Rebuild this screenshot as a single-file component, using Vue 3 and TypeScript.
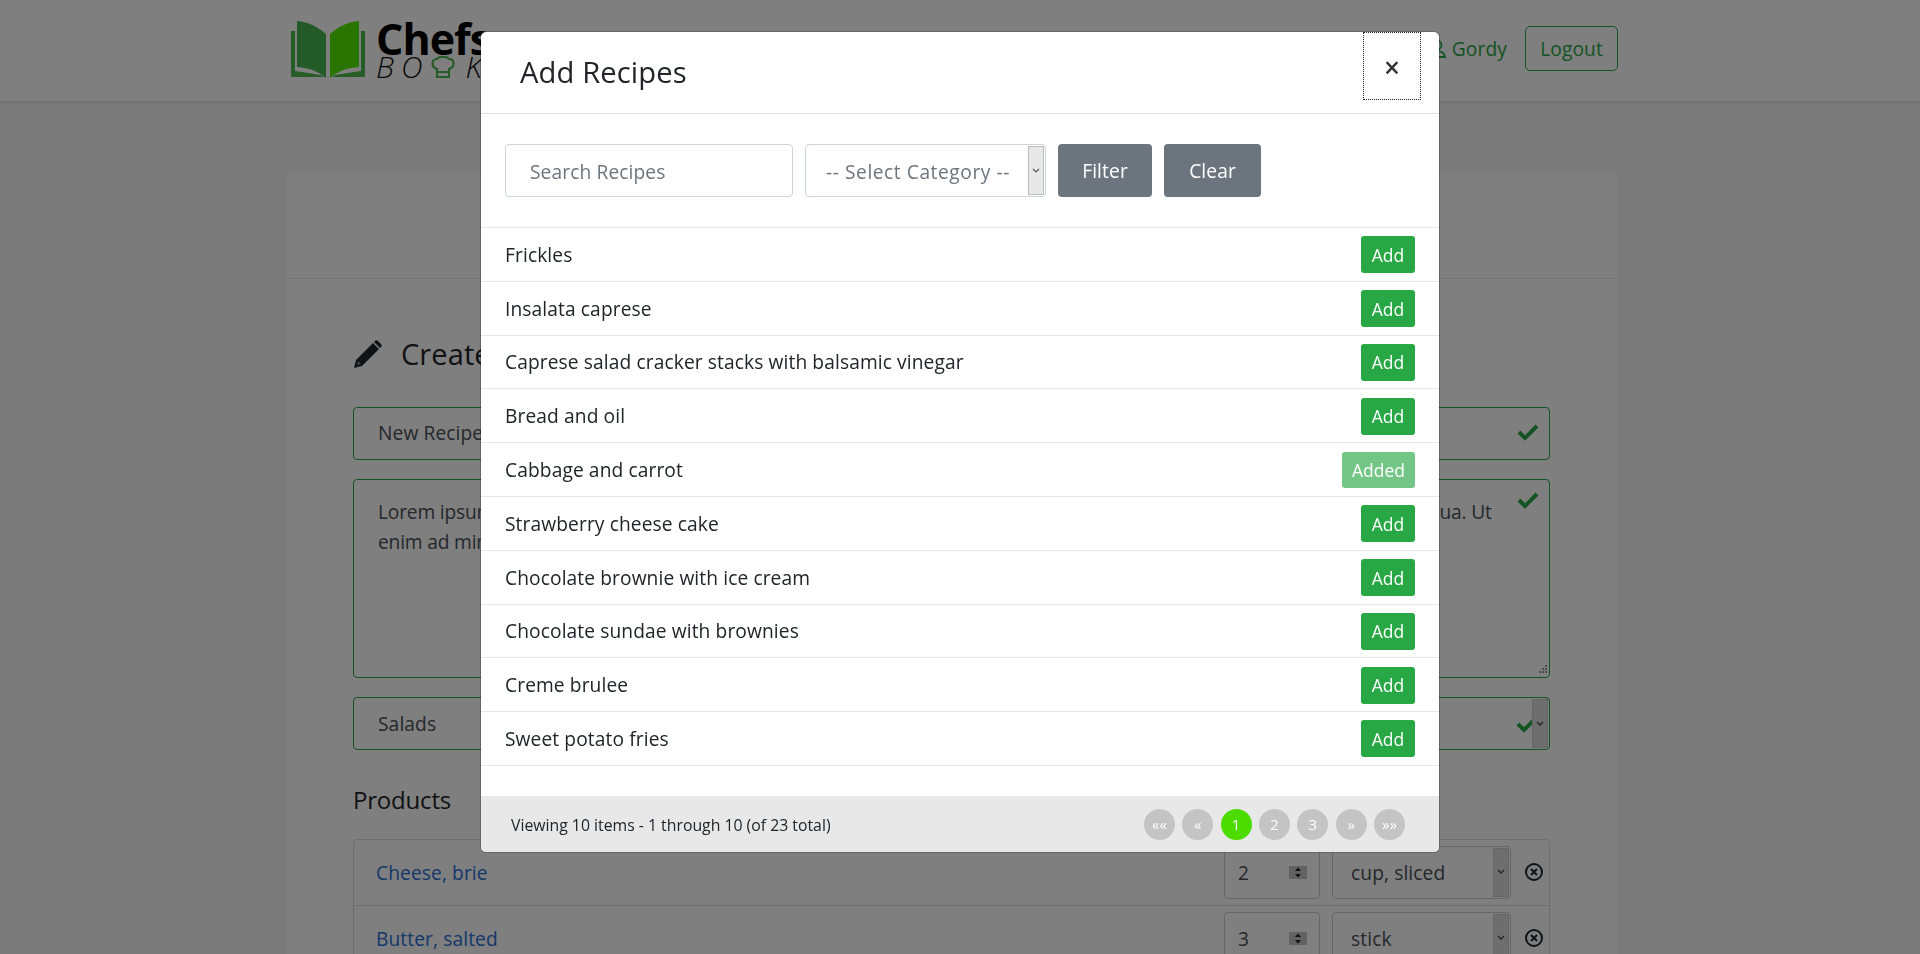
<script setup lang="ts">
const recipes: { name: string; added?: boolean }[] = [
  { name: 'Frickles' },
  { name: 'Insalata caprese' },
  { name: 'Caprese salad cracker stacks with balsamic vinegar' },
  { name: 'Bread and oil' },
  { name: 'Cabbage and carrot', added: true },
  { name: 'Strawberry cheese cake' },
  { name: 'Chocolate brownie with ice cream' },
  { name: 'Chocolate sundae with brownies' },
  { name: 'Creme brulee' },
  { name: 'Sweet potato fries' }
]
const pages = ['««', '«', '1', '2', '3', '»', '»»']
const products = [
  { name: 'Cheese, brie', qty: '2', unit: 'cup, sliced' },
  { name: 'Butter, salted', qty: '3', unit: 'stick' }
]
</script>

<template>
  <div class="page">
    <header class="nav">
      <div class="nav-in">
        <div class="logo">
          <svg width="76" height="60" viewBox="0 0 76 60">
            <path d="M1 11v46h33l-3-2-26-4V11z" fill="#4db84d" />
            <path d="M75 11v46H42l3-2 26-4V11z" fill="#4db84d" />
            <path d="M7 1c12 1 21 6 29 13v44c-8-7-17-10-29-11z" fill="#47b550" />
            <path d="M69 1c-12 1-21 6-29 13v44c8-7 17-10 29-11z" fill="#55ea00" />
          </svg>
          <div class="logo-text">
            <div class="chefs">Chefs</div>
            <div class="book">BO<svg class="hat" width="26" height="23" viewBox="0 0 26 23"><path d="M7 13C1 11 1 3 7 3c2-3 10-3 12 0 6 0 6 8 0 10v8H7zM7 16h12" fill="none" stroke="#4db84d" stroke-width="2.2"/></svg>K</div>
          </div>
        </div>
        <div class="nav-right">
          <svg class="user" width="20" height="20" viewBox="0 0 20 20"><circle cx="10" cy="6" r="4.5" fill="none" stroke="#28a745" stroke-width="1.8"/><path d="M2 18c0-8 16-8 16 0z" fill="none" stroke="#28a745" stroke-width="1.8"/></svg>
          <span class="gordy">Gordy</span>
          <button class="logout">Logout</button>
        </div>
      </div>
    </header>

    <main class="card">
      <div class="card-head"></div>
      <div class="card-body">
        <h2 class="create">
          <svg width="30" height="30" viewBox="0 0 30 30"><path d="M1 29l2-8L20 4l6 6L9 27zM22 2c1-1 2-1 3 0l3 3c1 1 1 2 0 3l-1 1-6-6z" fill="#212529"/><path d="M5 22l3 3-4 1z" fill="#8a8a8a"/></svg>
          <span>Create Recipe</span>
        </h2>
        <div class="field valid">
          <span>New Recipe</span>
          <svg class="check" width="22" height="18" viewBox="0 0 22 18"><path d="M2 9l6 6L20 3" fill="none" stroke="#28a745" stroke-width="4"/></svg>
        </div>
        <div class="field valid area">
          <p>Lorem ipsum dolor sit amet, consectetur adipiscing elit, sed do eiusmod tempor incididunt ut labore et dolore magna aliqua. Ut enim ad minim veniam, quis nostrud exercitation</p>
          <svg class="check top" width="22" height="18" viewBox="0 0 22 18"><path d="M2 9l6 6L20 3" fill="none" stroke="#28a745" stroke-width="4"/></svg>
          <svg class="grip" width="10" height="10" viewBox="0 0 10 10"><path d="M8 0h2v2H8zM5 3h2v2H5zM8 3h2v2H8zM2 6h2v2H2zM5 6h2v2H5zM8 6h2v2H8z" fill="#999"/></svg>
        </div>
        <div class="field valid sel">
          <span>Salads</span>
          <svg class="check near" width="22" height="18" viewBox="0 0 22 18"><path d="M2 9l6 6L20 3" fill="none" stroke="#28a745" stroke-width="4"/></svg>
          <span class="spin"><svg width="8" height="6" viewBox="0 0 8 6"><path d="M1 1l3 3 3-3" fill="none" stroke="#444" stroke-width="1.3"/></svg></span>
        </div>
        <h3 class="products">Products</h3>
        <div class="plist">
          <div class="prow" v-for="p in products" :key="p.name">
            <a class="pname">{{ p.name }}</a>
            <div class="qty">
              <span>{{ p.qty }}</span>
              <svg width="18" height="13" viewBox="0 0 18 13"><rect width="18" height="13" fill="#c4c4c4"/><path d="M9 1.5l3 3.5H6zM9 11.5l3-3.5H6z" fill="#222"/></svg>
            </div>
            <div class="unit">
              <span>{{ p.unit }}</span>
              <span class="spin"><svg width="8" height="6" viewBox="0 0 8 6"><path d="M1 1l3 3 3-3" fill="none" stroke="#444" stroke-width="1.3"/></svg></span>
            </div>
            <svg class="remove" width="20" height="20" viewBox="0 0 20 20"><circle cx="10" cy="10" r="8" fill="none" stroke="#212529" stroke-width="2"/><path d="M7 7l6 6M13 7l-6 6" stroke="#212529" stroke-width="2"/></svg>
          </div>
        </div>
      </div>
    </main>

    <div class="backdrop"></div>
    <div class="modal">
      <div class="m-head">
        <h4>Add Recipes</h4>
        <button class="close">×</button>
      </div>
      <div class="m-filter">
        <div class="search">Search Recipes</div>
        <div class="cat">
          <span>-- Select Category --</span>
          <span class="cat-spin"><svg width="8" height="6" viewBox="0 0 8 6"><path d="M1 1l3 3 3-3" fill="none" stroke="#555" stroke-width="1.2"/></svg></span>
        </div>
        <button class="gray filter">Filter</button>
        <button class="gray clear">Clear</button>
      </div>
      <ul class="m-list">
        <li v-for="r in recipes" :key="r.name">
          <span>{{ r.name }}</span>
          <button class="add" :class="{ added: r.added }">{{ r.added ? 'Added' : 'Add' }}</button>
        </li>
      </ul>
      <div class="m-foot">
        <span class="viewing">Viewing 10 items - 1 through 10 (of 23 total)</span>
        <div class="pager">
          <span v-for="p in pages" :key="p" class="pg" :class="{ on: p === '1' }">{{ p }}</span>
        </div>
      </div>
    </div>
  </div>
</template>

<style>
html, body { margin: 0; background: #f4f4f4; }
</style>

<style scoped>
* { box-sizing: border-box; }
.page {
  height: 954px; overflow: hidden; position: relative;
  font-family: "Open Sans", "Lato", sans-serif;
  font-size: 19.2px; letter-spacing: 0.1px; color: #212529; background: #f4f4f4;
}
.nav { height: 101px; background: #fff; box-shadow: 0 1px 4px rgba(0,0,0,.12); padding-right: 16px; }
.nav-in { width: 1332px; margin: 0 auto; height: 100%; display: flex; justify-content: space-between; align-items: flex-start; }
.logo { display: flex; gap: 10px; padding: 20px 0 0 4px; }
.logo-text { line-height: 1; }
.chefs { font-weight: 700; font-size: 43px; line-height: 38px; margin-bottom: -4px; color: #000; letter-spacing: -1px; }
.book { font-size: 30px; font-weight: 300; font-style: italic; letter-spacing: 7px; color: #111; display: flex; align-items: center; height: 26px; }
.hat { margin-right: 10px; }
.nav-right { display: flex; align-items: center; padding-top: 26px; }
.user { margin-right: 5px; }
.gordy { color: #28a745; margin-right: 18px; }
.logout { width: 93px; height: 45px; border: 1px solid #28a745; border-radius: 5px; background: none; color: #28a745; font: inherit; letter-spacing: inherit; }

.card { width: 1332px; margin: 72px 0 0 286px; background: #fff; }
.card-head { height: 106px; border-bottom: 1px solid #e4e4e4; }
.card-body { padding: 58px 68px 0 67px; }
.create { display: flex; align-items: center; gap: 18px; margin: 0 0 37px; font-weight: 400; font-size: 29px; height: 33px; }
.field { height: 53px; border: 1px solid #28a745; border-radius: 4px; margin-bottom: 19px; padding: 0 24px 2px; display: flex; align-items: center; color: #495057; position: relative; }
.area { height: 199px; align-items: flex-start; padding-top: 17px; }
.area p { margin: 0; line-height: 29.5px; padding-right: 14px; letter-spacing: -0.18px; }
.check { position: absolute; right: 10px; top: 15px; }
.check.top { top: 11px; }
.check.near { right: 11px; top: 17px; }
.grip { position: absolute; right: 2px; bottom: 2px; }
.sel { margin-bottom: 0; padding-bottom: 0; }
.spin { position: absolute; right: 1px; top: 1px; bottom: 1px; width: 16px; background: #ddd; border: 1px solid #ccc; display: flex; align-items: center; justify-content: center; }
.products { font-weight: 400; font-size: 24px; letter-spacing: -0.2px; margin: 33px 0 23px; line-height: 33px; height: 33px; }
.plist { border: 1px solid #ddd; border-radius: 4px 4px 0 0; }
.prow { height: 66px; display: flex; align-items: center; padding: 0 5px 1px 22px; border-bottom: 1px solid #ddd; }
.pname { flex: 1; color: #2a6fd6; }
.qty { width: 96px; height: 53px; border: 1px solid #ccc; border-radius: 4px; padding: 0 12px 0 13px; display: flex; align-items: center; justify-content: space-between; color: #495057; }
.unit { width: 179px; height: 53px; margin: 0 10px 0 12px; border: 1px solid #ccc; border-radius: 4px; padding: 0 18px; display: flex; align-items: center; position: relative; color: #495057; }
.remove { margin-left: 3px; }

.backdrop { position: fixed; inset: 0; background: rgba(0,0,0,.5); }
.modal { position: fixed; left: 481px; top: 32px; width: 958px; height: 820px; background: #fff; border-radius: 5px; box-shadow: 0 0 0 1px rgba(0,0,0,.2); display: flex; flex-direction: column; }
.m-head { height: 82px; border-bottom: 1px solid #dee2e6; display: flex; justify-content: space-between; flex-shrink: 0; }
.m-head h4 { margin: 0; padding: 22px 0 0 39px; font-weight: 400; font-size: 29.2px; line-height: 36px; }
.close { width: 58px; height: 68px; margin-right: 18px; border: 1px dotted #222; background: none; font: 600 28px "Open Sans", sans-serif; color: #333; padding: 2px 0 0; }
.m-filter { height: 114px; padding: 30px 24px 0; display: flex; gap: 12px; border-bottom: 1px solid #e6e6e6; flex-shrink: 0; }
.search { width: 288px; height: 53px; border: 1px solid #ced4da; border-radius: 4px; padding: 1px 24px 0; display: flex; align-items: center; color: #6c757d; }
.cat { width: 241px; height: 53px; border: 1px solid #ced4da; border-radius: 4px; padding: 1px 0 0 20px; display: flex; align-items: center; color: #6c757d; position: relative; letter-spacing: 0.55px; }
.cat-spin { position: absolute; right: 1px; top: 1px; bottom: 1px; background: #e8e8e8; border: 1px solid #bbb; display: flex; align-items: center; justify-content: center; width: 16px; }
.gray { height: 53px; background: #6c757d; color: #fff; border: 0; border-radius: 4px; font: inherit; letter-spacing: inherit; }
.filter { width: 94px; }
.clear { width: 97px; }
.m-list { list-style: none; margin: 0; padding: 0; flex: 1; }
.m-list li { height: 53.8px; border-bottom: 1px solid #e6e6e6; padding: 0 24px; display: flex; align-items: center; justify-content: space-between; }
.add { height: 37px; width: 54px; margin-top: 0.8px; padding: 0; background: #28a745; color: #fff; border: 0; border-radius: 3px; font: 400 17.5px "Open Sans", sans-serif; }
.add.added { width: 73px; height: 36px; background: #74c687; }
.m-foot { height: 56px; background: #e8e8e8; border-radius: 0 0 5px 5px; display: flex; align-items: center; justify-content: space-between; padding: 0 34px 0 30px; flex-shrink: 0; }
.viewing { font-size: 15.8px; letter-spacing: 0; padding-top: 2px; }
.pager { display: flex; gap: 7.33px; }
.pg { width: 31px; height: 31px; border-radius: 50%; background: #c4c4c4; color: #fff; font-size: 15px; display: flex; align-items: center; justify-content: center; }
.pg.on { background: #4cdc00; }
</style>
